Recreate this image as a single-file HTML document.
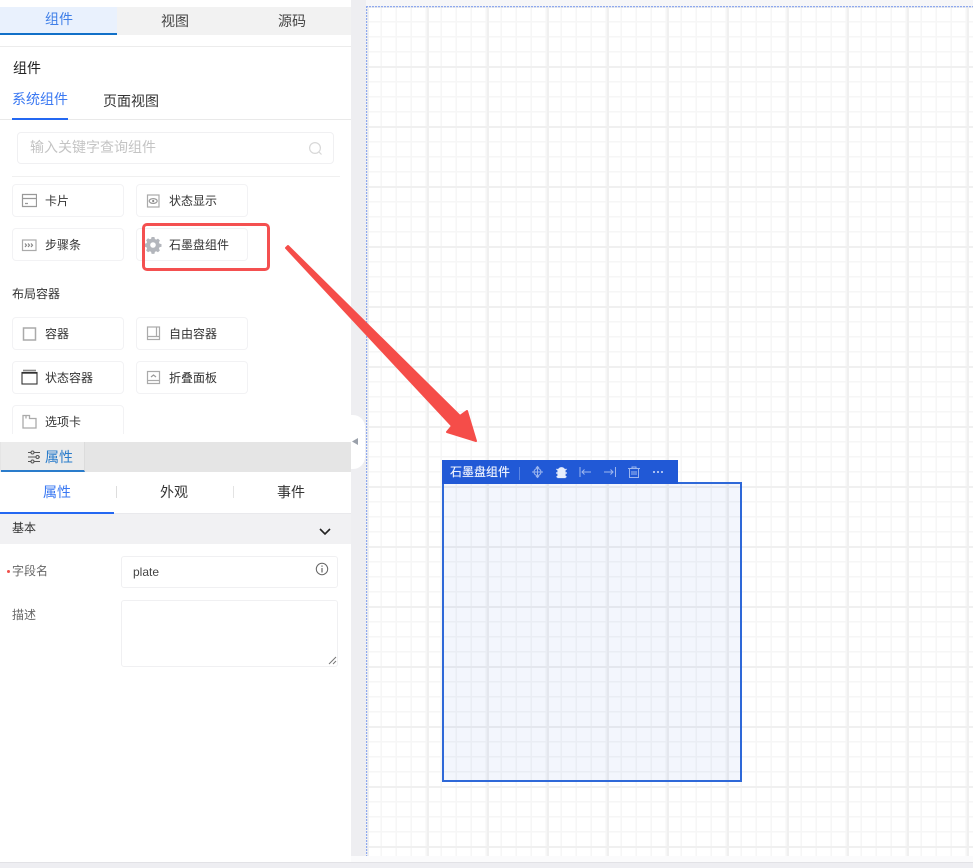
<!DOCTYPE html>
<html lang="zh"><head><meta charset="utf-8"><style>
*{box-sizing:border-box}
html,body{margin:0;padding:0}
body{width:973px;height:868px;overflow:hidden;position:relative;background:#f6f6f8;font-family:"Liberation Sans","Noto Sans CJK SC",sans-serif;color:#333}
#w{position:absolute;left:0;top:0;width:973px;height:868px;filter:blur(.3px)}
.a{position:absolute;white-space:nowrap}
.card{position:absolute;width:112px;height:33px;background:#fff;border:1px solid #f2f2f4;border-radius:4px}
.card span{position:absolute;left:32px;top:8px;font-size:12px;line-height:16px;color:#333;white-space:nowrap}
.card svg{position:absolute;left:8px;top:8px}
</style></head><body><div id="w">
<div class="a" style="left:351px;top:0;width:15px;height:856px;background:#eeeef1"></div>
<div class="a" style="left:351px;top:856px;width:622px;height:6px;background:#fbfbfc"></div>
<svg class="a" style="left:366px;top:6px" width="607" height="850">
<defs>
<pattern id="mi" width="15" height="15" patternUnits="userSpaceOnUse" x="1" y="0"><path d="M14.500 0V15M0 .5H15" stroke="#f6f6f6" stroke-width="2" fill="none"/></pattern>
<pattern id="ma" width="60" height="60" patternUnits="userSpaceOnUse" x="1" y="0"><path d="M1 0V60M0 1H60" stroke="#f0f0f0" stroke-width="2" fill="none"/></pattern>
</defs>
<rect width="607" height="850" fill="#fff"/>
<rect width="607" height="850" fill="url(#mi)"/>
<rect width="607" height="850" fill="url(#ma)"/>
<path d="M.5 0V850M0 .5H607" stroke="#8fa9ee" stroke-width="1.400" stroke-dasharray="2 1" fill="none"/>
</svg>
<div class="a" style="left:0;top:862px;width:973px;height:6px;background:#eeeef2;border-top:1px solid #e2e2e6"></div>

<!-- left panel -->
<div class="a" style="left:0;top:0;width:351px;height:862px;background:#fff"></div>
<div class="a" style="left:0;top:7px;width:351px;height:28px;background:#f2f2f2"></div>
<div class="a" style="left:0;top:7px;width:117px;height:28px;background:#e9f1fd;border-bottom:2px solid #1170c8"></div>
<div class="a" style="left:45px;top:9px;font-size:14px;line-height:20px;color:#3f7fe8">组件</div>
<div class="a" style="left:161px;top:11px;font-size:14px;line-height:20px;color:#444">视图</div>
<div class="a" style="left:278px;top:11px;font-size:14px;line-height:20px;color:#444">源码</div>
<div class="a" style="left:0;top:46px;width:351px;height:1px;background:#ececec"></div>
<div class="a" style="left:13px;top:58px;font-size:14px;line-height:20px;color:#222">组件</div>
<div class="a" style="left:12px;top:89px;font-size:14px;line-height:20px;color:#3a78f2">系统组件</div>
<div class="a" style="left:103px;top:91px;font-size:14px;line-height:20px;color:#333">页面视图</div>
<div class="a" style="left:0;top:119px;width:351px;height:1px;background:#e9e9e9"></div>
<div class="a" style="left:12px;top:118px;width:56px;height:2px;background:#2468f2"></div>
<div class="a" style="left:17px;top:132px;width:317px;height:32px;border:1px solid #f0f0f2;border-radius:4px;background:#fff"></div>
<div class="a" style="left:30px;top:137px;font-size:14px;line-height:20px;color:#c4c4c4">输入关键字查询组件</div>
<svg class="a" style="left:308px;top:141px" width="15" height="15" fill="none" stroke="#d8d8d8" stroke-width="1.200"><circle cx="7" cy="7" r="5.400"/><path d="M11 11l2.500 2.500"/></svg>
<div class="a" style="left:12px;top:176px;width:328px;height:1px;background:#f0f0f0"></div>

<div class="card" style="left:12px;top:184px"><span>卡片</span><svg width="16" height="16" fill="none" stroke="#999" stroke-width="1.200"><path d="M1.500 1.500h14v12h-14zM1.500 5.500h14M4 10.500h3"/></svg></div>
<div class="card" style="left:136px;top:184px"><span>状态显示</span><svg width="16" height="16" fill="none" stroke="#aaa" stroke-width="1.200"><rect x="2.500" y="2" width="11.500" height="12"/><ellipse cx="8.200" cy="8" rx="4" ry="2.400" stroke="#999"/><circle cx="8.200" cy="8" r="1.100" fill="#888" stroke="none"/></svg></div>
<div class="card" style="left:12px;top:228px"><span>步骤条</span><svg width="16" height="16" fill="none" stroke="#aaa" stroke-width="1.200"><rect x="1.500" y="3" width="13.500" height="10.500"/><path d="M4 6.500l1.500 1.700L4 10M7 6.500l1.500 1.700L7 10M10 6.500l1.500 1.700L10 10" stroke="#888"/></svg></div>
<div class="card" style="left:136px;top:228px"><span>石墨盘组件</span></div>
<svg class="a" style="left:144px;top:236px" width="18" height="18" viewBox="0 0 18 18"><path d="M7.600 1h2.800l.5 2 1.300.6 1.800-1 1.900 1.900-1 1.800.6 1.300 2 .5v2.700l-2 .5-.6 1.300 1 1.800-1.900 1.900-1.800-1-1.300.6-.5 2H7.600l-.5-2-1.300-.6-1.800 1-1.900-1.900 1-1.800-.6-1.300-2-.5V7.800l2-.5.6-1.300-1-1.800 1.900-1.900 1.800 1 1.300-.6zM9 6.200a2.800 2.800 0 100 5.600 2.800 2.800 0 000-5.600z" fill="#b3b6bc" fill-rule="evenodd"/></svg>
<div class="a" style="left:12px;top:286px;font-size:12px;line-height:17px;color:#333">布局容器</div>

<div class="card" style="left:12px;top:317px"><span>容器</span><svg width="16" height="16" fill="none" stroke="#aaa" stroke-width="1.500"><rect x="2.500" y="2" width="12" height="12"/></svg></div>
<div class="card" style="left:136px;top:317px"><span>自由容器</span><svg width="16" height="16" fill="none" stroke="#aaa" stroke-width="1.200"><rect x="2.500" y="1" width="12" height="12.500"/><path d="M2.500 10.500h12M11.500 1v9.500"/></svg></div>
<div class="card" style="left:12px;top:361px"><span>状态容器</span><svg width="17" height="17" fill="none" stroke="#333" stroke-width="1.100" style="left:8px;top:7px"><rect x="1" y="3.500" width="15" height="11.500"/><path d="M2 1.500h13" stroke="#888" stroke-width="1.600"/><path d="M1 4h15" stroke-width="1.400"/></svg></div>
<div class="card" style="left:136px;top:361px"><span>折叠面板</span><svg width="16" height="16" fill="none" stroke="#aaa" stroke-width="1.200"><rect x="2.500" y="1.500" width="12" height="12"/><path d="M2.500 10.500h12"/><path d="M6 7l2.500-2L11 7" stroke="#999"/></svg></div>
<div class="card" style="left:12px;top:405px"><span>选项卡</span><svg width="16" height="16" fill="none" stroke="#aaa" stroke-width="1.300"><path d="M2 1.500v12.500h13V4.500H8.500v-3zM5 1.500v3"/></svg></div>

<div class="a" style="left:0;top:434px;width:351px;height:8px;background:#fff"></div>
<div class="a" style="left:0;top:442px;width:351px;height:30px;background:#e5e5e5"></div>
<div class="a" style="left:1px;top:442px;width:84px;height:30px;background:#ebebeb;border-bottom:2px solid #2a7ccb;border-right:1px solid #dcdcdc"></div>
<svg class="a" style="left:27px;top:450px" width="14" height="14" fill="none" stroke="#555"><path d="M1 2.500h3M7 2.500h6M1 7h8M12 7h1M1 11.500h3M7 11.500h6"/><circle cx="5.500" cy="2.500" r="1.500"/><circle cx="10.500" cy="7" r="1.500"/><circle cx="5.500" cy="11.500" r="1.500"/></svg>
<div class="a" style="left:45px;top:447px;font-size:14px;line-height:20px;color:#2a7ccb">属性</div>
<div class="a" style="left:351px;top:415px;width:14px;height:54px;background:#fff;border-radius:0 12px 12px 0"></div>
<svg class="a" style="left:351px;top:437px" width="8" height="9"><path d="M7 1v7L1 4.500z" fill="#9aa0aa"/></svg>

<div class="a" style="left:0;top:472px;width:351px;height:42px;background:#fff;border-bottom:1px solid #e9e9ec"></div>
<div class="a" style="left:0;top:512px;width:114px;height:2px;background:#2468f2"></div>
<div class="a" style="left:43px;top:482px;font-size:14px;line-height:20px;color:#3a78f2">属性</div>
<div class="a" style="left:160px;top:482px;font-size:14px;line-height:20px;color:#333">外观</div>
<div class="a" style="left:277px;top:482px;font-size:14px;line-height:20px;color:#333">事件</div>
<div class="a" style="left:116px;top:486px;width:1px;height:12px;background:#ddd"></div>
<div class="a" style="left:233px;top:486px;width:1px;height:12px;background:#e3e3e3"></div>

<div class="a" style="left:0;top:514px;width:351px;height:30px;background:#f1f1f3"></div>
<div class="a" style="left:12px;top:520px;font-size:12px;line-height:17px;color:#333">基本</div>
<svg class="a" style="left:318px;top:527px" width="14" height="10" fill="none" stroke="#222" stroke-width="1.600"><path d="M2 2l5 5 5-5"/></svg>

<div class="a" style="left:7px;top:570px;width:3px;height:3px;border-radius:50%;background:#f0504a"></div>
<div class="a" style="left:12px;top:563px;font-size:12px;line-height:17px;color:#666">字段名</div>
<div class="a" style="left:121px;top:556px;width:217px;height:32px;border:1px solid #f0f0f2;border-radius:3px;background:#fff"></div>
<div class="a" style="left:133px;top:564px;font-size:12px;line-height:16px;color:#444">plate</div>
<svg class="a" style="left:315px;top:562px" width="14" height="14" fill="none" stroke="#666"><circle cx="7" cy="7" r="5.700"/><path d="M7 6v4.500M7 3.500v1.300" stroke-width="1.200"/></svg>
<div class="a" style="left:12px;top:607px;font-size:12px;line-height:17px;color:#666">描述</div>
<div class="a" style="left:121px;top:600px;width:217px;height:67px;border:1px solid #f0f0f2;border-radius:3px;background:#fff"></div>
<svg class="a" style="left:328px;top:656px" width="10" height="10" stroke="#777"><path d="M1 8l7-7M5 8l3-3"/></svg>

<!-- graphite plate component -->
<div class="a" style="left:442px;top:482px;width:300px;height:300px;border:2px solid #2e68d8;background:rgba(46,104,216,.06)"></div>
<div class="a" style="left:442px;top:460px;width:236px;height:24px;background:#2159d6"></div>
<div class="a" style="left:450px;top:464px;font-size:12px;line-height:17px;color:#eef2fd;text-shadow:0 0 .4px #fff">石墨盘组件</div>
<div class="a" style="left:519px;top:467px;width:1px;height:13px;background:#5a86e4"></div>
<svg class="a" style="left:530px;top:464px" width="140" height="16" fill="none" stroke="#9db6ee" stroke-width="1">
<circle cx="7.500" cy="8" r="3.500"/><path d="M7.500 2.500v11M2 8h11M6 4l1.500-1.500L9 4M6 12l1.500 1.500L9 12"/>
<path d="M28 7.500c0-5 7-5 7 0v6h-7zM26.500 5l3 2.500M36.500 5l-3 2.500M26 9h11M26.500 13l2.500-1.500M36.500 13l-2.500-1.500" stroke="#e6edfc" fill="#e6edfc" stroke-width="1.200"/>
<path d="M50 3v10M61 8h-9M54.500 5.500L52 8l2.500 2.500M85.500 3v10M74 8h9M80.500 5.500L83 8l-2.500 2.500"/>
<path d="M98 4.500h12M102 4.500V3h4v1.500M99.500 4.500V13.500h9V4.500M102 7v4M104 7v4M106 7v4"/>
</svg>
<svg class="a" style="left:652px;top:470px" width="12" height="4" fill="#d3defa"><circle cx="2" cy="2" r="1"/><circle cx="6" cy="2" r="1"/><circle cx="10" cy="2" r="1"/></svg>

<!-- annotations -->
<div class="a" style="left:142px;top:223px;width:128px;height:48px;border:3px solid #f45050;border-radius:5px"></div>
<svg class="a" style="left:0;top:0" width="973" height="868"><path d="M288 246L460 416L467 411L476 441L447 432L452 426L286 248Z" fill="#f54d49" stroke="#f54d49" stroke-linejoin="round" stroke-width="2"/></svg>
</div></body></html>
